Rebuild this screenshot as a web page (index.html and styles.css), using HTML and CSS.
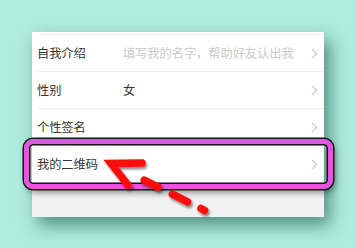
FILE: index.html
```html
<!DOCTYPE html>
<html lang="zh">
<head>
  <meta charset="UTF-8">
  <meta name="viewport" content="width=device-width, initial-scale=1.0">
  <title>个人资料</title>
  <link rel="stylesheet" href="styles.css">
</head>
<body>
  <div class="card">
    <div class="row">
      <div class="label">自我介绍</div>
      <div class="value placeholder">填写我的名字，帮助好友认出我</div>
      <svg class="chev" width="7" height="11" viewBox="0 0 7 11"><path d="M1 0.8 L5.6 5.5 L1 10.2" fill="none" stroke="#c4c4c4" stroke-width="1.2"/></svg>
    </div>
    <div class="row">
      <div class="label">性别</div>
      <div class="value">女</div>
      <svg class="chev" width="7" height="11" viewBox="0 0 7 11"><path d="M1 0.8 L5.6 5.5 L1 10.2" fill="none" stroke="#c4c4c4" stroke-width="1.2"/></svg>
    </div>
    <div class="row">
      <div class="label">个性签名</div>
      <div class="value"></div>
      <svg class="chev" width="7" height="11" viewBox="0 0 7 11"><path d="M1 0.8 L5.6 5.5 L1 10.2" fill="none" stroke="#c4c4c4" stroke-width="1.2"/></svg>
    </div>
    <div class="row qr">
      <div class="label">我的二维码</div>
      <div class="value"></div>
      <svg class="chev" width="7" height="11" viewBox="0 0 7 11"><path d="M1 0.8 L5.6 5.5 L1 10.2" fill="none" stroke="#c4c4c4" stroke-width="1.2"/></svg>
      <div class="highlight"></div>
    </div>
    <div class="filler"></div>
  </div>

  <svg class="arrow" width="356" height="248" viewBox="0 0 356 248">
    <defs>
      <filter id="drop" x="-20%" y="-20%" width="140%" height="140%">
        <feDropShadow dx="1.5" dy="2.5" stdDeviation="1" flood-color="#000" flood-opacity="0.45"/>
      </filter>
    </defs>
    <g filter="url(#drop)" stroke="#ff0a0a" stroke-width="7.5" stroke-linecap="round" fill="none">
      <path d="M142 163 L111 163.5 L128 185"/>
      <path d="M112 164 L208 212" stroke-dasharray="0 36 15.5 16 17 15 4 100"/>
    </g>
  </svg>
</body>
</html>
```

FILE: styles.css
```css
body {
  margin: 0;
  padding: 32px;
  background: #aeecdd;
  font-family: "Noto Sans CJK SC", "Noto Sans", sans-serif;
  position: relative;
  height: 248px;
  box-sizing: border-box;
  overflow: hidden;
}

.card {
  width: 292px;
  background: #fff;
  border-top: 2px solid #fff;
  box-shadow: 6px 8px 16px rgba(20, 80, 65, 0.6);
}

.row {
  position: relative;
  display: flex;
  align-items: center;
  height: 36px;
  margin-left: 5px;
  border-top: 1px solid #eeeeee;
  font-size: 12.2px;
  color: #333;
}

.row.qr {
  border-bottom: 1px solid #eeeeee;
}

.label {
  width: 86px;
  flex-shrink: 0;
}

.value {
  flex: 1;
}

.placeholder {
  color: #c9c9c9;
}

.chev {
  margin-right: 6px;
}

.highlight {
  position: absolute;
  left: -13px;
  right: -9px;
  top: -7px;
  bottom: -7px;
  border: 5px solid #e655df;
  border-radius: 9px;
  box-shadow: 0 0 0 1.5px #161616, inset 0 0 0 1.5px #161616, 2px 4px 6px rgba(0, 0, 0, 0.4);
}

.filler {
  height: 34px;
  background: #f2f2f2;
}

.arrow {
  position: absolute;
  left: 0;
  top: 0;
}
```
